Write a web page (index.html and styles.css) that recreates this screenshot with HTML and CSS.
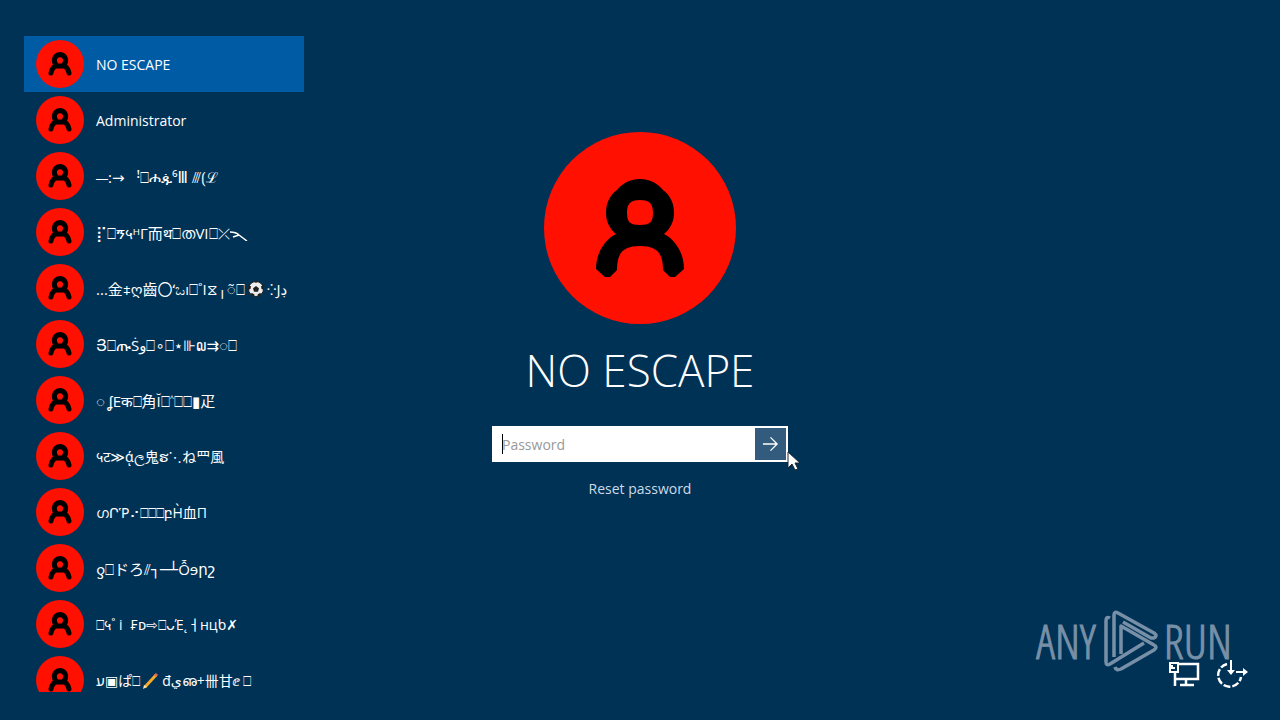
FILE: index.html
```html
<!DOCTYPE html>
<html lang="en">
<head>
<meta charset="utf-8">
<title>Sign in</title>
<link rel="stylesheet" href="styles.css">
</head>
<body>
<svg width="0" height="0" class="defs" aria-hidden="true">
  <symbol id="avatar" viewBox="0 0 192 192">
    <circle cx="96" cy="96" r="96" fill="#ff1000"/>
    <path fill="#000" fill-rule="evenodd" d="M96 47C107 47 114 52 119 58C127 64 130 72 130 81C130 90 126 97 120 102C132 108 140 122 140 137L131 145H126L119 138C119 122 114 114 96 114C78 114 73 122 73 138L66 145H61L52 137C52 122 60 108 72 102C66 97 62 90 62 81C62 72 65 64 73 58C78 52 85 47 96 47ZM96 68C86 68 83 72 83 81C83 90 86 93 96 93C106 93 109 90 109 81C109 72 106 68 96 68Z"/>
  </symbol>
  <symbol id="avatar-small" viewBox="0 0 48 48">
    <circle cx="24" cy="24" r="24" fill="#ff1000"/>
    <path fill="none" stroke="#000" stroke-width="5" stroke-linecap="round" stroke-linejoin="round" d="M15 33C16 29 18 26 21 26H27C30 26 32 29 33 33M20 25C17 21 18 15 24 14.500C30 15 31 21 28 25"/>
  </symbol>
</svg>
<div class="screen">
  <nav class="users" aria-label="Users">
    <button class="user selected"><svg class="face"><use href="#avatar-small"/></svg><span>NO ESCAPE</span></button>
    <button class="user"><svg class="face"><use href="#avatar-small"/></svg><span>Administrator</span></button>
    <button class="user symbols"><svg class="face"><use href="#avatar-small"/></svg><span>⎯⎯:→ &nbsp; ꜝ⎕ሐዹ⁶Ⅲ ⫻⟮ℒ</span></button>
    <button class="user symbols"><svg class="face"><use href="#avatar-small"/></svg><span>⡏⎕ኝ५ᴴГ而थ⎕തVI⎕⤫</span><svg class="slash" viewBox="0 0 18 16"><path d="M0 7Q6 7 9 10L17 16M9 10L3 12" fill="none" stroke="#fff" stroke-width="1.500"/></svg></button>
    <button class="user symbols"><svg class="face"><use href="#avatar-small"/></svg><span>...金⧧ღ齒〇ʻಒı⎕˚I⧖╷◌̃⎕</span><svg class="ball" viewBox="0 0 16 16"><circle cx="8" cy="8" r="7.500" fill="#eee" stroke="#222"/><path fill="#222" d="M8 5L11 7.300L10 10.800H6L5 7.300ZM5.500 0L8 2L10.500 0ZM0 5L3 5L2.500 8L0 9ZM16 5L13 5L13.500 8L16 9ZM2 13L4 12L6.500 13.500L6 16ZM14 13L12 12L9.500 13.500L10 16Z"/></svg><span>⁛Jڊ</span></button>
    <button class="user symbols"><svg class="face"><use href="#avatar-small"/></svg><span>Յ⎕ጡṠو⎕∘⎕⋆⊪໙⇉◌⎕</span></button>
    <button class="user symbols"><svg class="face"><use href="#avatar-small"/></svg><span>◌ ʆEक⎕角Ĭ⎕˄⎕⎕▮疋</span></button>
    <button class="user"><svg class="face"><use href="#avatar-small"/></svg><span>५ट≫ᾴල鬼ຮ⋱ね罒風</span></button>
    <button class="user"><svg class="face"><use href="#avatar-small"/></svg><span>ഗՐῬ⠔⎕⎕⎕բῊ血П</span></button>
    <button class="user symbols"><svg class="face"><use href="#avatar-small"/></svg><span>ƍ⎕ドろ⫽┐─┴Ỗɘրշ</span></button>
    <button class="user"><svg class="face"><use href="#avatar-small"/></svg><span>⎕५˚ i &nbsp;₣ᴅ⇨⎕ᴗΈ˛ㅓнцƅ✗</span></button>
    <button class="user"><svg class="face"><use href="#avatar-small"/></svg><span>ﬠ▣ぱ⎕</span><svg class="pencil" viewBox="0 0 16 16"><path d="M2 14L13 2" stroke="#f7a928" stroke-width="3"/><path d="M12 3L14 1" stroke="#df6b60" stroke-width="3"/><path d="M0 16L1 12L4 14Z" fill="#ffe4b0"/></svg><span>đيഌ+卌甘ⅇ ⎕</span></button>
  </nav>

  <main class="login">
    <svg class="portrait"><use href="#avatar"/></svg>
    <h1>NO ESCAPE</h1>
    <form class="password">
      <input type="password" placeholder="Password" aria-label="Password">
      <i class="caret"></i>
      <button type="button" aria-label="Submit"><svg viewBox="0 0 18 16"><path d="M1 8H16M9 1L16 8L9 15" fill="none" stroke="#fff" stroke-width="1.400"/></svg></button>
      <svg class="pointer" viewBox="0 0 14 20"><path d="M1 1V17L5 13L8 19L11 18L8 12H13Z" fill="#fff" stroke="#1b2733"/></svg>
    </form>
    <a class="reset" href="#">Reset password</a>
  </main>

  <footer class="corner">
    <div class="watermark">
      <span>ANY</span>
      <svg viewBox="0 0 56 64"><g fill="none" stroke="currentColor" stroke-width="3.500" stroke-linejoin="round"><path d="M8 9Q4 7 4 12V53Q4 57 8 55L42 34"/><path d="M12 48V6Q12 2 16 4L52 24Q56 27 52 29L49 29L21 13"/><path d="M19 45V17L52 36Q56 38 52 41L19 60Q14 62 13 58"/></g></svg>
      <span>RUN</span>
    </div>
    <button aria-label="Network"><svg viewBox="0 0 32 28"><path d="M10 4H30V19H8M18 19V25M12 25H26M7 11V26" fill="none" stroke="#fff" stroke-width="2.500"/><path d="M2 3H10V12H2ZM4 5V8H7" fill="none" stroke="#fff" stroke-width="2"/></svg></button>
    <button aria-label="Ease of access"><svg viewBox="0 0 32 28"><path d="M11 4A11.500 11.500 0 1 0 25 17" fill="none" stroke="#fff" stroke-width="2.500" stroke-dasharray="7 2"/><path d="M15 0V12M20 12H30" stroke="#fff" stroke-width="2"/><path d="M11 10H19L15 15ZM27 8L32 12L27 16Z" fill="#fff"/></svg></button>
  </footer>
</div>
</body>
</html>
```

FILE: styles.css
```css
* { box-sizing: border-box; }
body {
  margin: 0;
  background: #003256;
  color: #fff;
  font-family: "Open Sans", "Noto Sans", "DejaVu Sans", "Noto Sans CJK JP", sans-serif;
}
.defs { position: absolute; }
button { font: inherit; color: inherit; border: 0; padding: 0; background: none; }
.screen {
  display: grid;
  grid-template-columns: 280px 1fr 280px;
  height: 100vh;
  padding: 36px 24px 28px;
}
.users { display: flex; flex-direction: column; overflow: hidden; min-height: 0; }
.user {
  display: flex;
  flex: 0 0 56px;
  align-items: center;
  padding: 2px 12px 0;
  font-size: 14px;
  line-height: 20px;
  text-align: left;
  white-space: nowrap;
}
.user span { unicode-bidi: bidi-override; direction: ltr; }
.symbols { font-size: 15px; }
.selected { background: #005ba5; }
.face { width: 48px; height: 48px; margin: 0 12px 2px 0; flex: none; }
.ball, .pencil { width: 16px; height: 16px; margin: 0 3px; flex: none; }
.slash { width: 18px; height: 16px; }
.login { display: flex; flex-direction: column; align-items: center; padding-top: 96px; }
.portrait { width: 192px; height: 192px; flex: none; }
h1 { margin: 16px 0 26px; font-size: 44px; line-height: 60px; font-weight: 300; white-space: nowrap; }
.password { position: relative; display: flex; width: 296px; height: 36px; border: 2px solid #fff; background: #fff; }
.password input {
  flex: 1;
  min-width: 0;
  border: 0;
  outline: 0;
  padding: 0 8px;
  font: 14px "Open Sans", "Noto Sans", sans-serif;
  color: #000;
}
.password input::placeholder { color: #999; opacity: 1; }
.caret { position: absolute; left: 8px; top: 6px; width: 1px; height: 20px; background: #000; }
.password button { display: flex; align-items: center; justify-content: center; width: 31px; background: #335b7d; }
.password button svg { width: 17px; height: 16px; }
.pointer { position: absolute; left: 293px; top: 23px; width: 14px; height: 20px; }
.reset { margin-top: 17px; font-size: 14px; line-height: 20px; color: #ccdbe8; text-decoration: none; }
.corner { position: relative; display: flex; justify-content: flex-end; align-items: flex-end; gap: 16px; padding: 0 8px 4px 0; }
.corner button, .corner button svg { display: block; width: 32px; height: 28px; }
.watermark {
  position: absolute;
  right: 24px;
  bottom: 19px;
  display: flex;
  align-items: center;
  gap: 6px;
  color: #7890a7;
  -webkit-text-stroke: 1px #7890a7;
  font: 300 47px/64px "Open Sans Condensed Light", "Roboto Condensed", "Liberation Sans Narrow", "Open Sans", sans-serif;
}
.watermark svg { width: 56px; height: 64px; }
```
